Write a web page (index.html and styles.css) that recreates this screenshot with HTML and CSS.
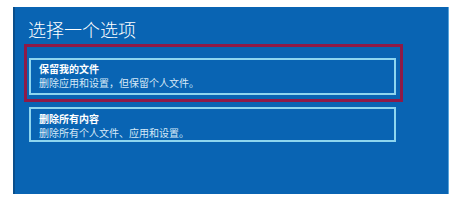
FILE: index.html
```html
<!DOCTYPE html>
<html lang="zh-CN">
<head>
    <meta charset="UTF-8">
    <title>选择一个选项</title>
    <link rel="stylesheet" href="styles.css">
</head>
<body>
    <div class="panel">
        <div class="title">选择一个选项</div>
        <div class="highlight">
            <div class="option">
                <div class="option-name">保留我的文件</div>
                <div class="option-desc">删除应用和设置，但保留个人文件。</div>
            </div>
        </div>
        <div class="option second">
            <div class="option-name">删除所有内容</div>
            <div class="option-desc">删除所有个人文件、应用和设置。</div>
        </div>
    </div>
</body>
</html>
```

FILE: styles.css
```css
body {
    margin: 0;
    background: #fff;
    font-family: "Noto Sans CJK SC", "Noto Sans", sans-serif;
}

.panel {
    box-sizing: border-box;
    width: 436px;
    height: 187px;
    margin: 7px 0 0 13px;
    padding: 10px 0 0 9px;
    background: #0964b3;
    border-left: 2px solid #0a4f8c;
    border-right: 1px solid #5aa6dc;
    color: #fff;
}

.title {
    margin-left: 4px;
    font-size: 18px;
    font-weight: 300;
    line-height: 24px;
}

.highlight {
    box-sizing: border-box;
    width: 379px;
    margin-top: 3px;
    padding: 11px 4px 4px 2px;
    border: 3px solid #8e1a48;
}

.option {
    box-sizing: border-box;
    width: 367px;
    padding: 2px 8px 3px;
    border: 2px solid #8ed6ef;
    font-size: 10px;
    line-height: 14px;
}

.option.second {
    margin: 5px 0 0 5px;
    height: 35px;
    padding: 3px 8px 0;
}

.option-name {
    font-weight: 700;
}

.option-desc {
    color: #d6e9f7;
}
```
